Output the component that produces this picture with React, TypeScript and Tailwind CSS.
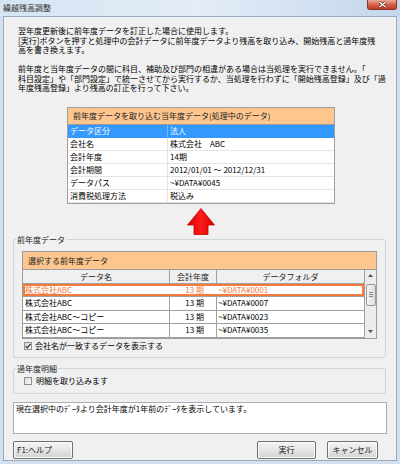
import React from "react";

const topRows: [string, string][] = [
  ["データ区分", "法人"],
  ["会社名", "株式会社　ABC"],
  ["会計年度", "14期"],
  ["会計期間", "2012/01/01 ～ 2012/12/31"],
  ["データパス", "~¥DATA¥0045"],
  ["消費税処理方法", "税込み"],
];

const prevRows: [string, string, string][] = [
  ["株式会社ABC", "13 期", "~¥DATA¥0001"],
  ["株式会社ABC", "13 期", "~¥DATA¥0007"],
  ["株式会社ABC～コピー", "13 期", "~¥DATA¥0023"],
  ["株式会社ABC～コピー", "13 期", "~¥DATA¥0035"],
];

function CheckBox({ checked }: { checked?: boolean }) {
  return (
    <div className="w-[8px] h-[8px] border border-[#8e8f8f] bg-gradient-to-br from-[#dcdcdc] to-[#fbfbfb] flex items-center justify-center shrink-0">
      {checked && (
        <svg width="6" height="6" viewBox="0 0 6 6">
          <path d="M0.6 3.1 L2.3 4.8 L5.4 1" fill="none" stroke="#2a2a2a" strokeWidth="1.2" />
        </svg>
      )}
    </div>
  );
}

function Button({ label, className }: { label: string; className: string }) {
  return (
    <div
      className={
        "h-[18px] border border-[#707070] rounded-[2px] bg-gradient-to-b from-[#f4f4f4] via-[#e6e6e6] to-[#d2d2d2] leading-[16px] text-[8px] text-[#1a1a1a] shadow-[inset_0_0_0_1px_#fbfbfb] " +
        className
      }
    >
      {label}
    </div>
  );
}

export default function App() {
  return (
    <div className="w-[400px] h-[464px] flex flex-col bg-[#d3e0ee] font-['Noto_Sans_CJK_JP',sans-serif] text-[8px] text-black overflow-hidden">
      {/* title bar */}
      <div className="h-[16px] shrink-0 flex items-start justify-between bg-gradient-to-r from-[#d6e4f2] via-[#e3ecf7] to-[#c4d7ed]">
        <span className="ml-[3px] mt-[3px] leading-[9px] text-[#303030]">繰越残高調整</span>
        <div className="mr-[3px] w-[30px] h-[10px] rounded-b-[3px] border border-t-0 border-[#8a3424] bg-gradient-to-b from-[#e9a898] via-[#d5634c] to-[#c23a24] flex items-center justify-center">
          <svg width="9" height="7" viewBox="0 0 9 7">
            <path d="M1.5 1 L7.5 6 M7.5 1 L1.5 6" stroke="#5a1a10" strokeWidth="2.6" />
            <path d="M1.5 1 L7.5 6 M7.5 1 L1.5 6" stroke="#ffffff" strokeWidth="1.5" />
          </svg>
        </div>
      </div>

      {/* client area */}
      <div className="mx-[3px] h-[445px] border border-[#9aabc0] bg-[#f0f0f0] flex flex-col items-start">
        {/* intro text */}
        <div className="ml-[14px] mt-[9px] leading-[9.5px] whitespace-nowrap">
          <p>翌年度更新後に前年度データを訂正した場合に使用します。</p>
          <p>[実行]ボタンを押すと処理中の会計データに前年度データより残高を取り込み、開始残高と過年度残</p>
          <p>高を書き換えます。</p>
          <p className="h-[9.5px]"></p>
          <p>前年度と当年度データの間に科目、補助及び部門の相違がある場合は当処理を実行できません。「</p>
          <p>科目設定」や「部門設定」で統一させてから実行するか、当処理を行わずに「開始残高登録」及び「過</p>
          <p>年度残高登録」より残高の訂正を行って下さい。</p>
        </div>

        {/* current year table */}
        <div className="ml-[63px] mt-[14px] w-[268px] border border-[#a0a0a0] bg-white">
          <div className="h-[17px] bg-[#fdc68e] border-b border-[#9a9a9a] pl-[5px] leading-[16px] text-[#222]">
            前年度データを取り込む当年度データ(処理中のデータ)
          </div>
          {topRows.map(([k, v], i) => (
            <div
              key={k}
              className={
                "flex h-[13px] leading-[12px] border-b " +
                (i === 0 ? "bg-[#3399ff] text-white border-[#3399ff]" : "border-[#e4e4e4]")
              }
            >
              <div className={"w-[100px] pl-[2px] border-r " + (i === 0 ? "border-[#7ab8f5]" : "border-[#e4e4e4]")}>{k}</div>
              <div className="flex-1 pl-[2px]">{v}</div>
            </div>
          ))}
        </div>

        {/* red arrow */}
        <svg className="ml-[183px] mt-[4px]" width="28" height="27" viewBox="0 0 28 27">
          <defs>
            <linearGradient id="ar" x1="0" x2="1" y1="0" y2="0">
              <stop offset="0" stopColor="#d00000" />
              <stop offset="0.5" stopColor="#ff1a1a" />
              <stop offset="1" stopColor="#d00000" />
            </linearGradient>
          </defs>
          <polygon points="14,0.5 27.5,17 21,17 21,26.5 7,26.5 7,17 0.5,17" fill="url(#ar)" stroke="#c80000" strokeWidth="0.8" />
        </svg>

        {/* previous year group */}
        <fieldset className="ml-[9px] w-[373px] border border-[#d0d5da] rounded-[2px] p-0 pb-[6px]">
          <legend className="ml-[2px] px-[1px] leading-[10px] text-[#222]">前年度データ</legend>
          <div className="pl-[8px] pt-[6px]">
            <div className="w-[355px] border border-[#9c9c9c] bg-white">
              <div className="h-[18px] bg-[#fdc68e] border-b border-[#9c9c9c] pl-[5px] leading-[17px] text-[#222]">
                選択する前年度データ
              </div>
              <div className="flex">
                <div className="w-[341px]">
                  <div className="flex h-[14px] leading-[13px] bg-[#f0f0f0] border-b border-[#a0a0a0] text-[#222]">
                    <div className="w-[147px] text-center border-r border-[#a0a0a0]">データ名</div>
                    <div className="w-[47px] text-center border-r border-[#a0a0a0]">会計年度</div>
                    <div className="flex-1 text-center">データフォルダ</div>
                  </div>
                  {prevRows.map(([n, y, f], i) => (
                    <div
                      key={i}
                      className={
                        "flex h-[13.5px] leading-[12.5px] border-b border-[#a0a0a0] " +
                        (i === 0 ? "text-[#f47a3a] shadow-[inset_0_0_0_2px_#f47b3b]" : "text-black")
                      }
                    >
                      <div className={"w-[147px] pl-[2px] border-r " + (i === 0 ? "border-transparent" : "border-[#a0a0a0]")}>{n}</div>
                      <div className={"w-[47px] text-right pr-[12px] border-r " + (i === 0 ? "border-transparent" : "border-[#a0a0a0]")}>{y}</div>
                      <div className="flex-1 pl-[1px]">{f}</div>
                    </div>
                  ))}
                </div>
                {/* scrollbar */}
                <div className="w-[12px] bg-[#ececec] border-l border-[#a0a0a0] flex flex-col items-center">
                  <div className="h-[12px] w-full flex items-center justify-center">
                    <svg width="5" height="3" viewBox="0 0 5 3"><polygon points="2.5,0 5,3 0,3" fill="#555" /></svg>
                  </div>
                  <div className="mt-[2px] h-[22px] w-[10px] rounded-[2px] border border-[#9a9a9a] bg-gradient-to-r from-[#f4f4f4] to-[#dcdcdc] flex flex-col items-center justify-center gap-[1px]">
                    <div className="w-[4px] h-px bg-[#888]" />
                    <div className="w-[4px] h-px bg-[#888]" />
                    <div className="w-[4px] h-px bg-[#888]" />
                  </div>
                  <div className="flex-1" />
                  <div className="h-[12px] w-full flex items-center justify-center">
                    <svg width="5" height="3" viewBox="0 0 5 3"><polygon points="0,0 5,0 2.5,3" fill="#555" /></svg>
                  </div>
                </div>
              </div>
            </div>
          </div>
          <div className="ml-[10px] mt-[2px] flex items-center gap-[3px] h-[10px]">
            <CheckBox checked />
            <span className="leading-[10px]">会社名が一致するデータを表示する</span>
          </div>
        </fieldset>

        {/* past detail group */}
        <fieldset className="ml-[9px] mt-[6px] w-[373px] border border-[#d0d5da] rounded-[2px] p-0 pb-[7px]">
          <legend className="ml-[2px] px-[1px] leading-[10px] text-[#222]">過年度明細</legend>
          <div className="ml-[10px] mt-[2px] flex items-center gap-[4px] h-[10px]">
            <CheckBox />
            <span className="leading-[10px]">明細を取り込みます</span>
          </div>
        </fieldset>

        {/* message box */}
        <div className="ml-[9px] mt-[8px] w-[374px] h-[32px] border border-[#abadb3] bg-white pl-[2px] pt-[1px] leading-[10px]">
          現在選択中のﾃﾞｰﾀより会計年度が1年前のﾃﾞｰﾀを表示しています。
        </div>

        {/* buttons */}
        <div className="mt-[7px] flex w-full">
          <Button label="F1:ヘルプ" className="ml-[9px] w-[60px] pl-[3px]" />
          <Button label="実行" className="ml-[184px] w-[59px] text-center" />
          <Button label="キャンセル" className="ml-[11px] w-[51px] text-center" />
        </div>
      </div>
    </div>
  );
}
